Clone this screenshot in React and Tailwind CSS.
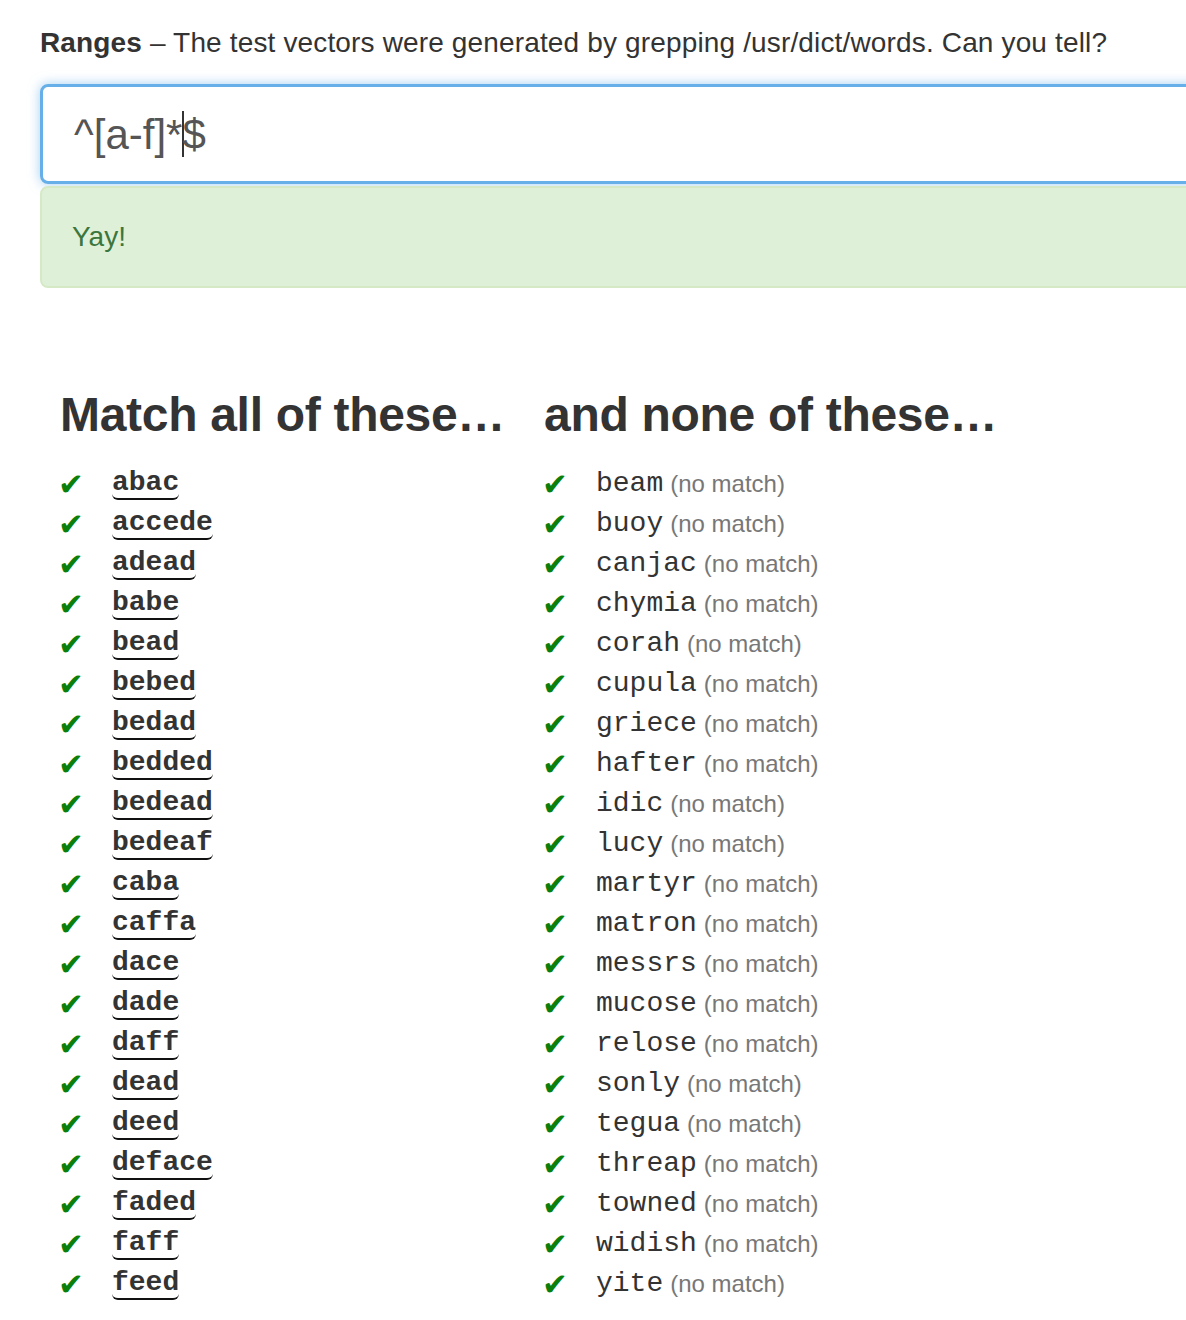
const MATCH = ['abac','accede','adead','babe','bead','bebed','bedad','bedded','bedead','bedeaf','caba','caffa','dace','dade','daff','dead','deed','deface','faded','faff','feed'];
const NOMATCH = ['beam','buoy','canjac','chymia','corah','cupula','griece','hafter','idic','lucy','martyr','matron','messrs','mucose','relose','sonly','tegua','threap','towned','widish','yite'];

const sans = "font-['Liberation_Sans',Arial,sans-serif]";
const mono = "font-['Liberation_Mono','Courier_New',monospace]";

function Check() {
  return (
    <span className="w-[54px] shrink-0 -ml-[2px] font-['DejaVu_Sans',sans-serif] text-[31px] leading-none text-[#0a7f0a]">✔</span>
  );
}

export default function App() {
  return (
    <div className={`w-[1186px] h-[1320px] overflow-hidden bg-white text-[#333] ${sans}`}>
      <div className="w-[1400px] pl-10 pt-[24px]">
        <p className="text-[28px] leading-[38px] tracking-[0.15px]">
          <b>Ranges</b> – The test vectors were generated by grepping /usr/dict/words. Can you tell?
        </p>

        <div className="mt-[22px] h-[100px] rounded-[8px] border-[3px] border-[#66afe9] shadow-[0_0_12px_rgba(102,175,233,0.6)] flex items-center pl-[31px] text-[42px] text-[#555]">
          <span>^[a-f]*</span>
          <span className="inline-block w-[1.5px] h-[46px] bg-[#333] -mr-[1.5px]" />
          <span>$</span>
        </div>

        <div className="mt-[2px] h-[102px] rounded-[8px] border-2 border-[#d6e9c6] bg-[#dff0d8] flex items-center pl-[30px] text-[28px] text-[#3c763d]">
          Yay!
        </div>

        <div className="mt-[96px] pl-[20px] flex">
          <div className="w-[484px]">
            <h3 className="text-[48px] font-bold leading-[62px] mb-[18px] tracking-[-0.3px]">Match all of these…</h3>
            {MATCH.map(w => (
              <div key={w} className="h-10 flex items-center">
                <Check />
                <span className={`${mono} text-[28px] font-bold leading-[30px] border-b-2 border-[#111] rounded-b-[6px]`}>{w}</span>
              </div>
            ))}
          </div>
          <div>
            <h3 className="text-[48px] font-bold leading-[62px] mb-[18px] tracking-[-0.3px]">and none of these…</h3>
            {NOMATCH.map(w => (
              <div key={w} className="h-10 flex items-center">
                <Check />
                <span className={`${mono} text-[28px] leading-[30px]`}>{w}</span>
                <span className="ml-[7px] text-[24px] text-[#777]">(no match)</span>
              </div>
            ))}
          </div>
        </div>
      </div>
    </div>
  );
}
